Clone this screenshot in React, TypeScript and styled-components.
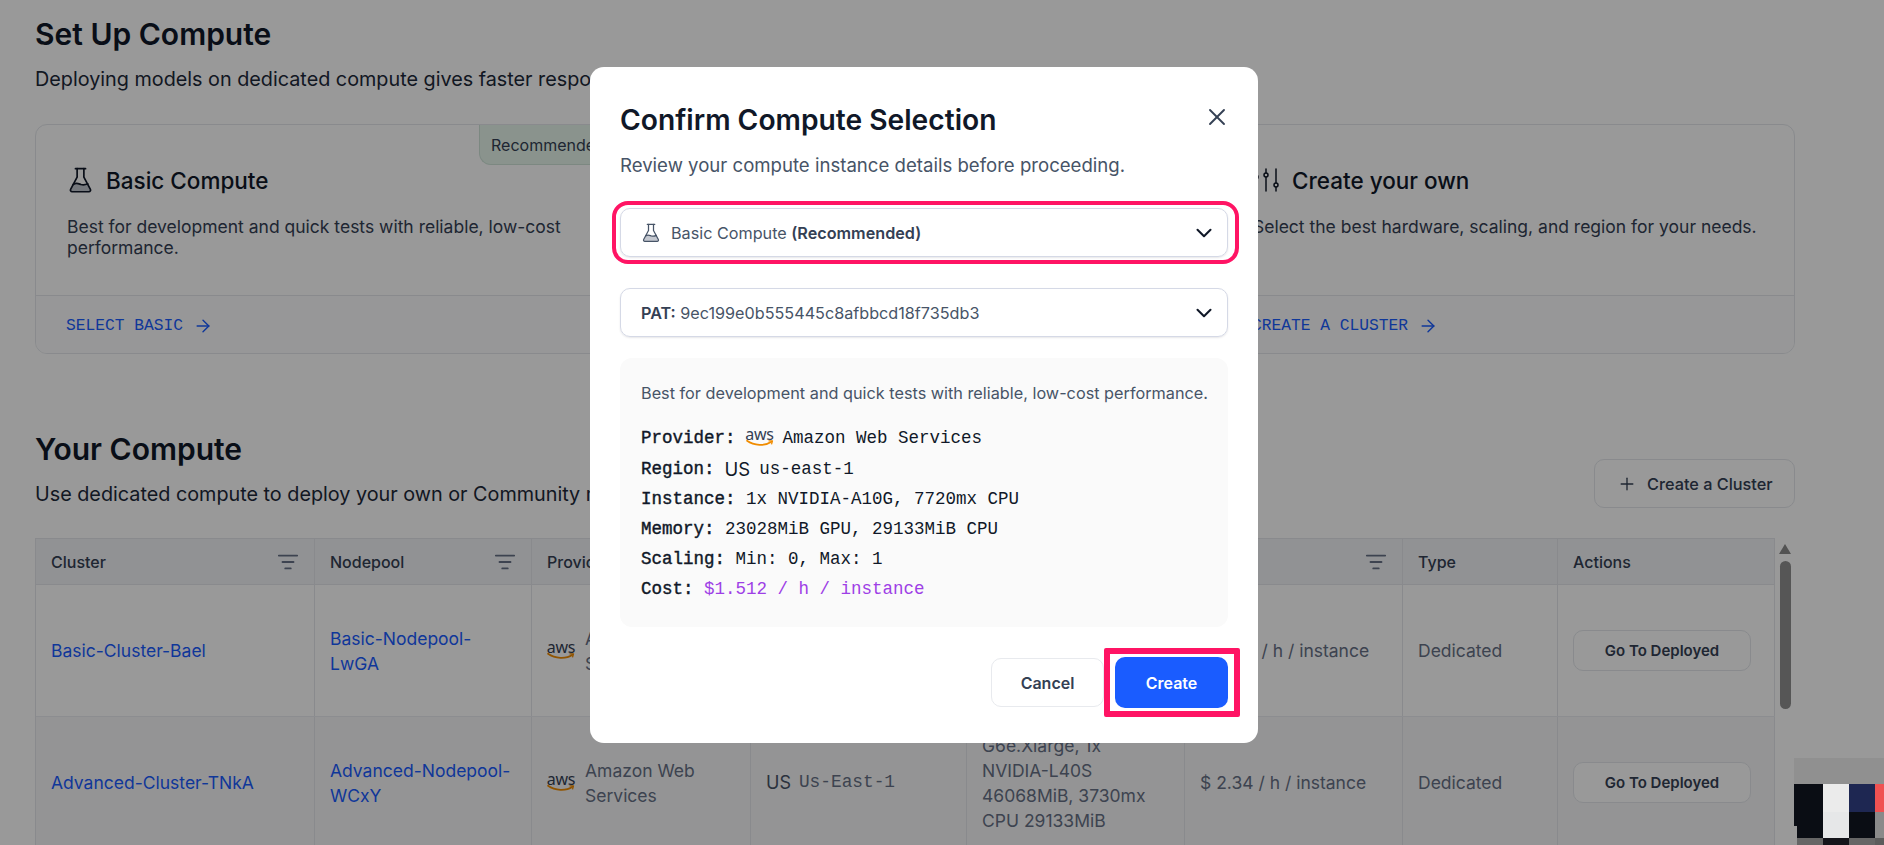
import React from 'react'
import styled, { createGlobalStyle } from 'styled-components'
import { ArrowRight, ChevronDown, ListFilter, Plus, X } from 'lucide-react'

const GlobalStyle = createGlobalStyle`
  * { box-sizing: border-box; }
  html, body {
    margin: 0;
    height: 100%;
    overflow: hidden;
    background: #fff;
    font-family: Inter, "Noto Sans", sans-serif;
    color: #101828;
  }
`

const MONO = `"Liberation Mono", "DejaVu Sans Mono", monospace`

const Page = styled.div`
  height: 845px;
  overflow: hidden;
  padding: 14px 89px 0 35px;
`

const PageTitle = styled.h1`
  margin: 0;
  font-size: 30px;
  line-height: 40px;
  font-weight: 600;
  color: #101828;
`

const PageSub = styled.p`
  margin: 11px 0 0;
  font-size: 19.8px;
  line-height: 28px;
  white-space: nowrap;
  color: #1d2939;
`

const CardGroup = styled.div`
  display: grid;
  grid-template-columns: 572px 1fr 572px;
  height: 230px;
  margin-top: 31px;
  border: 1px solid #e4e7ec;
  border-radius: 12px;
  overflow: hidden;
`

const Card = styled.div`
  position: relative;
  display: flex;
  flex-direction: column;
`

const CardBody = styled.div`
  flex: 1;
  padding: 42px 30px 0 31px;
`

const CardHead = styled.div`
  display: flex;
  align-items: center;
  gap: 12px;
  height: 26px;
  font-size: 22.5px;
  font-weight: 500;
  color: #101828;
`

const CardText = styled.p`
  margin: 23px 0 0;
  font-size: 17.5px;
  line-height: 21px;
  color: #344054;
`

const CardFoot = styled.div`
  display: flex;
  align-items: center;
  gap: 10px;
  height: 58px;
  padding: 2px 0 0 30px;
  border-top: 1px solid #e4e7ec;
  background: #fcfcfd;
  font-family: ${MONO};
  font-size: 16.25px;
  color: #1a5cff;
`

const Badge = styled.div`
  position: absolute;
  top: 0;
  right: -1px;
  width: 130px;
  height: 40px;
  padding: 0 11px;
  display: flex;
  align-items: center;
  border-left: 1px solid #cfe3d8;
  border-bottom: 1px solid #cfe3d8;
  border-bottom-left-radius: 12px;
  background: #e6f6ec;
  font-size: 16px;
  color: #344054;
`

const ComputeHead = styled.div`
  display: flex;
  align-items: flex-end;
  justify-content: space-between;
  margin-top: 75px;
`

const CreateCluster = styled.button`
  display: flex;
  align-items: center;
  gap: 10px;
  width: 201px;
  height: 49px;
  padding: 0 0 0 22px;
  border: 1px solid #e4e7ec;
  border-radius: 10px;
  background: #fff;
  font: 500 16.3px Inter, sans-serif;
  color: #344054;
`

const TableWrap = styled.div`
  display: flex;
  margin-top: 30px;
`

const Table = styled.div`
  width: 1740px;
  border-left: 1px solid #e4e7ec;
  border-top: 1px solid #e4e7ec;
`

const COLUMNS = '279px 217px 219px 216px 218px 218px 155px 1fr'

const HeadRow = styled.div`
  display: grid;
  grid-template-columns: ${COLUMNS};
  height: 46px;
  background: #f2f4f7;
  border-bottom: 1px solid #e4e7ec;
`

const HeadCell = styled.div`
  display: flex;
  align-items: center;
  justify-content: space-between;
  padding: 0 15px;
  border-right: 1px solid #e4e7ec;
  font-size: 16px;
  font-weight: 500;
  color: #344054;
`

const BodyRow = styled.div<{ $striped?: boolean }>`
  display: grid;
  grid-template-columns: ${COLUMNS};
  height: 132px;
  background: ${p => (p.$striped ? '#f7f7f8' : '#fff')};
  border-bottom: 1px solid #eaecf0;
`

const Cell = styled.div`
  display: flex;
  flex-direction: column;
  justify-content: center;
  padding: 0 15px;
  border-right: 1px solid #e4e7ec;
  font-size: 17.5px;
  line-height: 25px;
  color: #667085;
`

const LinkCell = styled(Cell)`
  color: #1a5cff;
`

const ProviderCell = styled(Cell)`
  flex-direction: row;
  align-items: center;
  justify-content: flex-start;
  gap: 10px;
`

const RegionCell = styled(Cell)`
  flex-direction: row;
  align-items: center;
  justify-content: flex-start;
  gap: 8px;
  font-family: ${MONO};
  font-size: 17.8px;
`

const FlagText = styled.span`
  font-family: Inter, sans-serif;
  font-size: 18px;
  color: #475467;
`

const DeployButton = styled.button`
  width: 178px;
  height: 41px;
  border: 1px solid #e4e7ec;
  border-radius: 10px;
  background: #fff;
  font: 600 15px Inter, sans-serif;
  color: #344054;
`

const ScrollTrack = styled.div`
  display: flex;
  flex-direction: column;
  align-items: center;
  width: 20px;
  padding-top: 6px;
`

const ScrollArrow = styled.div`
  width: 0;
  height: 0;
  border-left: 6px solid transparent;
  border-right: 6px solid transparent;
  border-bottom: 10px solid #8a8a8a;
`

const ScrollThumb = styled.div`
  width: 11px;
  height: 148px;
  margin-top: 7px;
  border-radius: 6px;
  background: #8f8f8f;
`

const Backdrop = styled.div`
  position: fixed;
  inset: 0;
  background: rgba(0, 0, 0, 0.4);
`

const Modal = styled.div`
  position: fixed;
  top: 67px;
  left: 590px;
  width: 668px;
  height: 676px;
  padding: 36px 30px 0;
  border-radius: 14px;
  background: #fff;
`

const ModalHead = styled.div`
  display: flex;
  align-items: flex-start;
  justify-content: space-between;
`

const ModalTitle = styled.h2`
  margin: 0;
  font-size: 28.2px;
  line-height: 34px;
  font-weight: 600;
  color: #101828;
`

const CloseButton = styled.button`
  display: flex;
  width: 28px;
  height: 28px;
  margin: 0 -3px 0 0;
  padding: 0;
  border: 0;
  background: none;
  color: #344054;
`

const ModalSub = styled.p`
  margin: 15px 0 0;
  font-size: 18.6px;
  line-height: 26px;
  color: #475467;
`

const Select = styled.div<{ $top: number }>`
  position: relative;
  display: flex;
  align-items: center;
  height: 49px;
  margin-top: ${p => p.$top}px;
  padding: 0 10px 0 20px;
  border: 1px solid #d5d9e6;
  border-radius: 10px;
  box-shadow: 0 1px 2px rgba(16, 24, 40, 0.1);
  font-size: 16.2px;
  color: #475467;
`

const SelectLabel = styled.span`
  flex: 1;
  display: flex;
  align-items: center;
  gap: 10px;
`

const Strong = styled.b`
  font-weight: 600;
  color: #344054;
`

const Ring = styled.div`
  position: absolute;
  inset: -8px -12px -8px -9px;
  border: 4px solid #ff1464;
  border-radius: 16px;
`

const InfoPanel = styled.div`
  height: 269px;
  margin-top: 21px;
  padding: 24px 21px 0;
  border-radius: 12px;
  background: #fafafa;
`

const InfoText = styled.p`
  margin: 0;
  font-size: 16.25px;
  line-height: 22px;
  white-space: nowrap;
  color: #475467;
`

const Specs = styled.div`
  margin-top: 18px;
  font-family: ${MONO};
  font-size: 17.5px;
  line-height: 30px;
  color: #101828;
`

const SpecRow = styled.div<{ $tall?: boolean }>`
  display: flex;
  align-items: center;
  white-space: pre;
  height: ${p => (p.$tall ? 32 : 30)}px;
`

const SpecLabel = styled.span`
  -webkit-text-stroke: 0.4px #101828;
`

const Purple = styled.span`
  color: #9e3fe6;
`

const SpecFlag = styled.span`
  font-family: Inter, sans-serif;
  font-size: 18.5px;
  margin: 0 9px 0 10px;
`

const SpecLogo = styled.span`
  display: inline-flex;
  margin: 0 9px 0 10px;
`

const Actions = styled.div`
  display: flex;
  align-items: center;
  justify-content: flex-end;
  gap: 11px;
  margin-top: 30px;
`

const CancelButton = styled.button`
  width: 113px;
  height: 49px;
  border: 1px solid #e8eaee;
  border-radius: 10px;
  background: #fff;
  font: 600 16px Inter, sans-serif;
  color: #344054;
`

const CreateButton = styled.button`
  position: relative;
  width: 113px;
  height: 51px;
  border: 0;
  border-radius: 10px;
  background: #1a5cff;
  font: 600 16px Inter, sans-serif;
  color: #fff;
`

const ButtonFrame = styled.div`
  position: absolute;
  inset: -9px -12px -9px -11px;
  border: 6px solid #ff1464;
  border-radius: 2px;
`

const AwsBox = styled.span<{ $size: number }>`
  position: relative;
  display: inline-flex;
  flex-direction: column;
  align-items: center;
  flex: none;
  width: ${p => p.$size * 1.75}px;
  height: ${p => p.$size * 1.5}px;
  font: 400 ${p => p.$size}px/${p => p.$size}px "Noto Sans", sans-serif;
  letter-spacing: -0.3px;
  color: #344054;
`

const AwsSmile = styled.svg`
  position: absolute;
  left: 0;
  bottom: 2px;
  width: 100%;
  height: 36%;
`

const CornerBlock = styled.svg`
  position: fixed;
  right: 0;
  bottom: 0;
  display: block;
`

const AwsLogo = ({ size }: { size: number }) => (
  <AwsBox $size={size}>
    aws
    <AwsSmile viewBox="0 0 28 8" fill="none">
      <path d="M1 1.5c7 5 18 5.5 24.500 1" stroke="#f08c00" strokeWidth="1.7" strokeLinecap="round" />
      <path d="M22.500 1.500h4l-1 3.500" stroke="#f08c00" strokeWidth="1.3" strokeLinejoin="round" />
    </AwsSmile>
  </AwsBox>
)

const FlaskIcon = ({ size }: { size: number }) => (
  <svg width={size} height={size} viewBox="0 0 24 24" fill="none" stroke="currentColor" strokeWidth="1.5" strokeLinecap="round" strokeLinejoin="round">
    <path d="M5.500 15.500c3-2 5-.500 7 .100 2 .500 4 .200 6-.700l2 5.600v1.500H3.500v-1.500z" fill="#c4c8d0" stroke="none" />
    <path d="M7.500 1.500h9" />
    <path d="M9 1.500v7.500L3.200 19.800a1.500 1.500 0 0 0 1.300 2.200h15a1.500 1.500 0 0 0 1.300-2.200L15 9V1.500" />
    <path d="M5.500 15.500c3-2 5-.500 7 .100 2 .500 4 .200 6-.700" />
  </svg>
)

const SlidersIcon = () => (
  <svg width="27" height="26" viewBox="0 0 27 26" fill="none" stroke="currentColor" strokeWidth="1.5" strokeLinecap="round">
    <path d="M3 2v6M3 12v12" />
    <circle cx="3" cy="10" r="2" />
    <path d="M13 2v4M13 10v14" />
    <circle cx="13" cy="8" r="2" />
    <path d="M23 2v14M23 20v4" />
    <circle cx="23" cy="18" r="2" />
  </svg>
)

// pixelated widget in the corner, it sits above the backdrop
const Corner = () => (
  <CornerBlock width="90" height="87" viewBox="0 0 90 87">
    <rect width="90" height="26" fill="#909090" />
    <rect y="26" width="29" height="42" fill="#0a0d14" />
    <rect x="3" y="26" width="26" height="54" fill="#0a0d14" />
    <rect y="68" width="3" height="19" fill="#999999" />
    <rect x="29" y="26" width="26" height="28" fill="#ebebeb" />
    <rect x="29" y="54" width="26" height="26" fill="#e6e7e8" />
    <rect x="55" y="26" width="26" height="28" fill="#1e2752" />
    <rect x="55" y="54" width="26" height="26" fill="#0a0d14" />
    <rect x="81" y="26" width="9" height="28" fill="#f05252" />
    <rect x="81" y="54" width="9" height="26" fill="#8a8a8a" />
    <rect x="3" y="80" width="26" height="7" fill="#666666" />
    <rect x="29" y="80" width="26" height="7" fill="#14141a" />
    <rect x="55" y="80" width="26" height="7" fill="#666666" />
    <rect x="81" y="80" width="9" height="7" fill="#5c5c5c" />
  </CornerBlock>
)

const HEADERS: { name: string; filter: boolean }[] = [
  { name: 'Cluster', filter: true },
  { name: 'Nodepool', filter: true },
  { name: 'Provider', filter: true },
  { name: 'Region', filter: true },
  { name: 'Instance', filter: true },
  { name: 'Price', filter: true },
  { name: 'Type', filter: false },
  { name: 'Actions', filter: false },
]

const ROWS = [
  {
    cluster: 'Basic-Cluster-Bael',
    nodepool: 'Basic-Nodepool-LwGA',
    region: 'Us-East-1',
    instance: 'G4dn.Xlarge, 1x NVIDIA-A10G 23028MiB, 7720mx CPU 29133MiB',
    price: '$ 1.512 / h / instance',
  },
  {
    cluster: 'Advanced-Cluster-TNkA',
    nodepool: 'Advanced-Nodepool-WCxY',
    region: 'Us-East-1',
    instance: 'G6e.Xlarge, 1x NVIDIA-L40S 46068MiB, 3730mx CPU 29133MiB',
    price: '$ 2.34 / h / instance',
  },
]

export default function App() {
  return (
    <>
      <GlobalStyle />
      <Page>
        <PageTitle>Set Up Compute</PageTitle>
        <PageSub>Deploying models on dedicated compute gives faster response times and more control over your workloads.</PageSub>
        <CardGroup>
          <Card>
            <Badge>Recommended</Badge>
            <CardBody>
              <CardHead><FlaskIcon size={27} />Basic Compute</CardHead>
              <CardText>Best for development and quick tests with reliable, low-cost performance.</CardText>
            </CardBody>
            <CardFoot>SELECT BASIC <ArrowRight size={20} strokeWidth={1.7} /></CardFoot>
          </Card>
          <Card>
            <CardBody>
              <CardHead>Advanced Compute</CardHead>
              <CardText>Higher performance for production workloads.</CardText>
            </CardBody>
            <CardFoot>SELECT ADVANCED <ArrowRight size={20} strokeWidth={1.7} /></CardFoot>
          </Card>
          <Card>
            <CardBody>
              <CardHead><SlidersIcon />Create your own</CardHead>
              <CardText>Select the best hardware, scaling, and region for your needs.</CardText>
            </CardBody>
            <CardFoot>CREATE A CLUSTER <ArrowRight size={20} strokeWidth={1.7} /></CardFoot>
          </Card>
        </CardGroup>

        <ComputeHead>
          <div>
            <PageTitle>Your Compute</PageTitle>
            <PageSub>Use dedicated compute to deploy your own or Community models.</PageSub>
          </div>
          <CreateCluster><Plus size={20} strokeWidth={1.6} />Create a Cluster</CreateCluster>
        </ComputeHead>

        <TableWrap>
          <Table>
            <HeadRow>
              {HEADERS.map(h => (
                <HeadCell key={h.name}>
                  {h.name}
                  {h.filter && <ListFilter size={22} color="#667085" />}
                </HeadCell>
              ))}
            </HeadRow>
            {ROWS.map((row, i) => (
              <BodyRow key={row.cluster} $striped={i % 2 === 1}>
                <LinkCell>{row.cluster}</LinkCell>
                <LinkCell>{row.nodepool}</LinkCell>
                <ProviderCell><AwsLogo size={16} />Amazon Web Services</ProviderCell>
                <RegionCell><FlagText>US</FlagText>{row.region}</RegionCell>
                <Cell>{row.instance}</Cell>
                <Cell>{row.price}</Cell>
                <Cell>Dedicated</Cell>
                <Cell><DeployButton>Go To Deployed</DeployButton></Cell>
              </BodyRow>
            ))}
          </Table>
          <ScrollTrack>
            <ScrollArrow />
            <ScrollThumb />
          </ScrollTrack>
        </TableWrap>
      </Page>

      <Backdrop />
      <Corner />

      <Modal>
        <ModalHead>
          <ModalTitle>Confirm Compute Selection</ModalTitle>
          <CloseButton><X size={28} strokeWidth={1.6} /></CloseButton>
        </ModalHead>
        <ModalSub>Review your compute instance details before proceeding.</ModalSub>

        <Select $top={30}>
          <SelectLabel>
            <FlaskIcon size={20} />
            <span>Basic Compute <Strong>(Recommended)</Strong></span>
          </SelectLabel>
          <ChevronDown size={26} strokeWidth={1.9} color="#101828" />
          <Ring />
        </Select>

        <Select $top={31}>
          <SelectLabel>
            <span><Strong>PAT:</Strong> 9ec199e0b555445c8afbbcd18f735db3</span>
          </SelectLabel>
          <ChevronDown size={26} strokeWidth={1.9} color="#101828" />
        </Select>

        <InfoPanel>
          <InfoText>Best for development and quick tests with reliable, low-cost performance.</InfoText>
          <Specs>
            <SpecRow $tall><SpecLabel>Provider:</SpecLabel><SpecLogo><AwsLogo size={16} /></SpecLogo>Amazon Web Services</SpecRow>
            <SpecRow><SpecLabel>Region:</SpecLabel><SpecFlag>US</SpecFlag>us-east-1</SpecRow>
            <SpecRow><SpecLabel>Instance:</SpecLabel> 1x NVIDIA-A10G, 7720mx CPU</SpecRow>
            <SpecRow><SpecLabel>Memory:</SpecLabel> 23028MiB GPU, 29133MiB CPU</SpecRow>
            <SpecRow><SpecLabel>Scaling:</SpecLabel> Min: 0, Max: 1</SpecRow>
            <SpecRow><SpecLabel>Cost:</SpecLabel><Purple> $1.512 / h / instance</Purple></SpecRow>
          </Specs>
        </InfoPanel>

        <Actions>
          <CancelButton>Cancel</CancelButton>
          <CreateButton>Create<ButtonFrame /></CreateButton>
        </Actions>
      </Modal>
    </>
  )
}
